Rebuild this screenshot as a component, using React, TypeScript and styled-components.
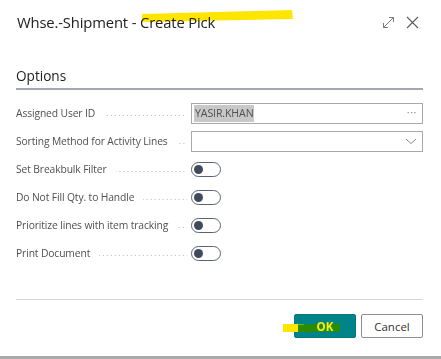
import styled, { createGlobalStyle } from 'styled-components'

const GlobalStyle = createGlobalStyle`
    html, body {
        margin: 0;
        padding: 0;
        background: #ffffff;
    }
    body {
        font-family: 'Open Sans', 'Noto Sans', sans-serif;
    }
`

const Dialog = styled.div`
    width: 441px;
    height: 359px;
    display: flex;
    flex-direction: column;
    background: #ffffff;
    box-sizing: border-box;
    overflow: hidden;
`

const Header = styled.div`
    position: relative;
    height: 44px;
    display: flex;
    align-items: center;
    padding: 0 22px 0 17px;
`

const Title = styled.h1`
    flex: 1;
    margin: 0;
    font-size: 14.8px;
    font-weight: 400;
    color: #212121;
    letter-spacing: -0.15px;
`

const TitleMark = styled.svg`
    position: absolute;
    left: 0;
    top: 0;
    mix-blend-mode: multiply;
    pointer-events: none;
`

const HeaderIcons = styled.div`
    display: flex;
    align-items: center;
    gap: 11px;
`

const Body = styled.div`
    padding: 0 18px 0 16px;
`

const SectionTitle = styled.h2`
    margin: 22px 0 0;
    padding-bottom: 2px;
    font-size: 13.6px;
    line-height: 20px;
    font-weight: 400;
    color: #212121;
    border-bottom: 2px solid #a4a8ae;
`

const Fields = styled.div`
    margin-top: 9px;
    display: flex;
    flex-direction: column;
`

const Row = styled.div`
    height: 28px;
    display: grid;
    grid-template-columns: 171px 1fr;
    column-gap: 4px;
    align-items: center;
`

const LabelCell = styled.div`
    display: flex;
    align-items: center;
    gap: 9px;
    min-width: 0;
`

const Label = styled.span`
    font-size: 10.3px;
    letter-spacing: -0.12px;
    color: #505050;
    white-space: nowrap;
`

const Leader = styled.span`
    flex: 1;
    height: 1px;
    margin-top: 4px;
    background-image: linear-gradient(to right, #b8b8b8 1px, transparent 1px);
    background-size: 4px 1px;
    background-repeat: repeat-x;
    background-position: right;
`

const InputBox = styled.div`
    height: 21px;
    border: 1px solid #a9a9a9;
    display: flex;
    align-items: center;
    padding: 0 5px 0 2px;
    box-sizing: border-box;
    font-size: 10.6px;
    letter-spacing: -0.12px;
    color: #505050;
`

const Selected = styled.span`
    background: #c8c8c8;
    padding: 1px 1px;
    line-height: 15px;
    color: #505050;
`

const Grow = styled.span`
    flex: 1;
`

const Ellipsis = styled.span`
    font-size: 11px;
    color: #8a8a8a;
    letter-spacing: 0.5px;
    margin-bottom: 4px;
`

const Toggle = styled.div`
    width: 30px;
    height: 15px;
    box-sizing: border-box;
    border: 1.2px solid #5b6373;
    border-radius: 8px;
    display: flex;
    align-items: center;
    padding-left: 2px;
`

const Knob = styled.span`
    width: 9px;
    height: 9px;
    border-radius: 50%;
    background: #3f4a5c;
`

const Footer = styled.div`
    margin: auto 18px 0 16px;
    border-top: 1px solid #d6d6d6;
    padding: 14px 0 18px;
    display: flex;
    justify-content: flex-end;
    gap: 5px;
`

const Button = styled.button<{ $primary?: boolean }>`
    position: relative;
    width: 62px;
    height: 24px;
    border-radius: 2px;
    box-sizing: border-box;
    font-family: 'Open Sans', 'Noto Sans', sans-serif;
    font-size: 11.5px;
    padding: 0;
    cursor: pointer;
    border: 1px solid ${(p) => (p.$primary ? '#00797e' : '#8f8f8f')};
    background: ${(p) => (p.$primary ? '#00848a' : '#ffffff')};
    color: ${(p) => (p.$primary ? '#f3ee10' : '#333333')};
    font-weight: ${(p) => (p.$primary ? 700 : 400)};
`

const ButtonText = styled.span`
    position: relative;
    z-index: 2;
`

const ButtonMark = styled.svg`
    position: absolute;
    left: -13px;
    top: 8px;
    z-index: 1;
    pointer-events: none;
`

const BottomBar = styled.div`
    height: 3px;
    background: #a9a9a9;
`

const ExpandIcon = () => (
    <svg width="13" height="13" viewBox="0 0 13 13" fill="none" stroke="#7a7a7a" strokeWidth="1">
        <path d="M1.5 11.5 L11.5 1.5" />
        <path d="M7 1.5 H11.5 V6" />
        <path d="M1.5 7 V11.5 H6" />
    </svg>
)

const CloseIcon = () => (
    <svg width="13" height="13" viewBox="0 0 13 13" fill="none" stroke="#5a5a5a" strokeWidth="1.1">
        <path d="M1 1 L12 12 M12 1 L1 12" />
    </svg>
)

const ChevronDown = () => (
    <svg width="12" height="7" viewBox="0 0 12 7" fill="none" stroke="#8a8a8a" strokeWidth="1">
        <path d="M1 1 L6 5.5 L11 1" />
    </svg>
)

const toggles = [
    'Set Breakbulk Filter',
    'Do Not Fill Qty. to Handle',
    'Prioritize lines with item tracking',
    'Print Document',
]

export default function App() {
    return (
        <>
            <GlobalStyle />
            <Dialog>
                <Header>
                    <Title>Whse.-Shipment - Create Pick</Title>
                    <HeaderIcons>
                        <ExpandIcon />
                        <CloseIcon />
                    </HeaderIcons>
                    <TitleMark width="441" height="44">
                        <path d="M142 14 L292 10 L293 19 L142 22 Z" fill="#ffe600" />
                    </TitleMark>
                </Header>
                <Body>
                    <SectionTitle>Options</SectionTitle>
                    <Fields>
                        <Row>
                            <LabelCell>
                                <Label>Assigned User ID</Label>
                                <Leader />
                            </LabelCell>
                            <InputBox>
                                <Selected>YASIR.KHAN</Selected>
                                <Grow />
                                <Ellipsis>···</Ellipsis>
                            </InputBox>
                        </Row>
                        <Row>
                            <LabelCell>
                                <Label>Sorting Method for Activity Lines</Label>
                                <Leader />
                            </LabelCell>
                            <InputBox>
                                <Grow />
                                <ChevronDown />
                            </InputBox>
                        </Row>
                        {toggles.map((t) => (
                            <Row key={t}>
                                <LabelCell>
                                    <Label>{t}</Label>
                                    <Leader />
                                </LabelCell>
                                <Toggle>
                                    <Knob />
                                </Toggle>
                            </Row>
                        ))}
                    </Fields>
                </Body>
                <Footer>
                    <Button $primary>
                        <ButtonMark width="60" height="10">
                            <path d="M1 1 L22 1 L22 9 L1 9 Z" fill="#ffe600" />
                            <path d="M16 1.5 L58 0.5 L58 8.5 L16 9 Z" fill="#2c8c00" />
                        </ButtonMark>
                        <ButtonText>OK</ButtonText>
                    </Button>
                    <Button>Cancel</Button>
                </Footer>
                <BottomBar />
            </Dialog>
        </>
    )
}
